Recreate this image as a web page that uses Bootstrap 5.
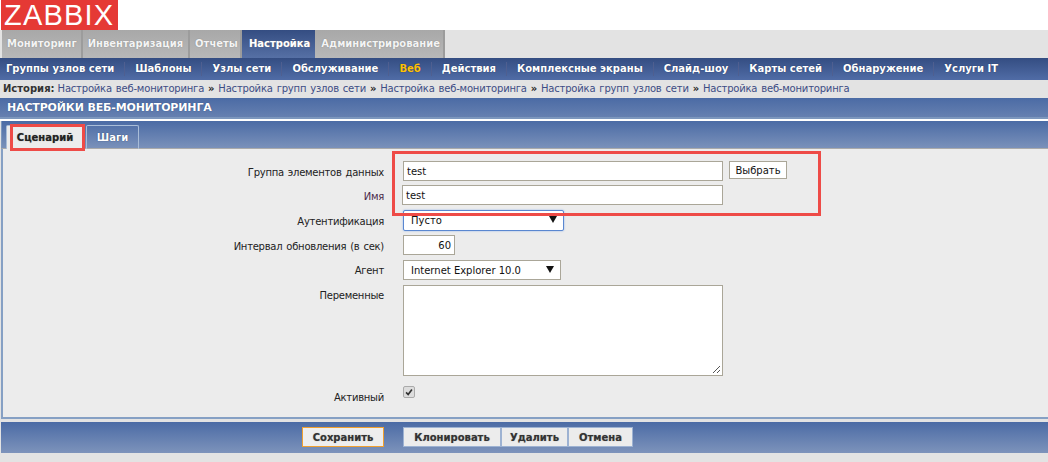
<!DOCTYPE html>
<html lang="ru"><head><meta charset="utf-8"><title>Zabbix</title>
<link rel="stylesheet" href="https://cdn.jsdelivr.net/npm/bootstrap@5.3.0/dist/css/bootstrap.min.css">
<style>
html,body{height:462px;overflow:hidden}
body{background:#e3e3e3;font-family:"DejaVu Sans",sans-serif;font-size:10px;line-height:14px;color:#111;position:relative}
.logo-bar{height:30px;background:#fff}
.logo-box{width:117px;margin-left:1px;height:30px;background:#e53935;color:#fff;font:400 29px/31px "Liberation Sans",sans-serif;letter-spacing:1.2px;padding-left:3px;overflow:hidden}
.main-nav{height:28px;padding-left:2px}
.main-item{height:28px;padding:0 5px;display:flex;align-items:center;font-weight:700;color:#f4f4f4;background:linear-gradient(#a8a8a8,#b8b8b8);border-right:2px solid #9c9c9c;text-shadow:0 0 1px #777;white-space:nowrap}
.main-item.first{padding-right:4px}
.main-item.third{padding-right:2px}
.main-item.on{background:linear-gradient(#344d82,#5670a5);border:0;color:#fff;padding:0 5px 0 7px}
.main-item.last{padding:0 3px 0 6px}
.sub-nav{height:22px;background:linear-gradient(#344d82,#506ca6);padding-left:6px;font-weight:700;color:#fff;align-items:center;white-space:nowrap;text-shadow:0 0 1px #1c2c55}
.sub-nav span{margin-right:10px;padding-right:10px;border-right:1px solid #4f5f90}
.sub-nav span:last-child{border:0}
.sub-nav .cur{color:#ffc107}
.trail{height:18px;padding-left:3px;color:#3d4d85;word-spacing:1px;letter-spacing:-.2px;white-space:nowrap;align-items:center}
.trail b{color:#333;word-spacing:0;letter-spacing:0;margin-right:3px}
.trail i{font-style:normal;font-weight:700;color:#222;margin:0 4px}
.title-bar{height:21px;background:linear-gradient(#4b6ba5,#6680b0);color:#fff;font-size:11px;letter-spacing:-.15px;font-weight:700;line-height:20px;padding-left:7px;border-bottom:2px solid #7d97bd;text-shadow:0 0 1px #274070}
.gap-white{height:2px;background:#fff}
.tab-strip{height:28px;margin-left:1px;background:linear-gradient(#4b6ba5,#7a91ba);padding:4px 0 0 4px;border-bottom:1px solid #aaa;border-left:1px solid #7d97bd}
.tab-one{height:24px;font-weight:700;display:flex;align-items:center;justify-content:center;border:1px solid #a9bdd8;border-bottom:0;border-radius:2px 2px 0 0}
.tab-one.on{background:#ececec;color:#222;width:78px;margin-right:2px;text-shadow:0 0 1px #888}
.tab-one.off{color:#fff;text-shadow:0 0 1px #1c2c55;width:53px}
.form-area{height:270px;margin-left:1px;background:#ececec;border-left:2px solid #86a0c4;border-bottom:2px solid #86a0c4;padding-top:12px}
.f-row{display:flex;margin-bottom:5px}
.f-row.tight{margin-bottom:4px}
.f-label{width:381px;text-align:right;color:#222;flex:none;margin-right:19px;padding-top:5px;word-spacing:1px;letter-spacing:-.25px}
.f-label.name{color:#4a2a4a}
.f-label.top-small{padding-top:4px}
.f-label.low{padding-top:11px}
.f-input{height:20px;background:#fff;border:1px solid #aaa698;padding:0 3px;color:#111;line-height:19px;display:block}
.w-wide{width:320px}
.w-shift{width:321px;margin-left:-1px}
.sel-a{width:161px;height:21px;border:1px solid #5a87d0;border-radius:2px;box-shadow:0 0 2px #8ab0ea;background:#fff;position:relative;padding-left:7px;line-height:19px;overflow:hidden}
.sel-b{width:158px;position:relative;padding-left:7px}
.caret-mark{position:absolute;right:6px;top:5px;width:0;height:0;border-left:4px solid transparent;border-right:4px solid transparent;border-top:7px solid #111}
.num-input{width:52px;text-align:right;padding-right:3px}
.text-box{width:320px;height:91px;background:#fff;border:1px solid #aaa698;position:relative}
.grip{position:absolute;right:1px;bottom:1px}
.pick-btn{height:18px;width:58px;margin-left:6px;background:#fff;border:1px solid #aaa698;font-size:10px;line-height:15px;padding:0;color:#111;text-align:center}
.tick-wrap{padding-top:6px}
.tick{width:12px;height:12px;background:#ddd;border:1px solid #aaa;border-radius:2px;display:block}
.foot-bar{height:31px;margin:3px 0 0 1px;background:linear-gradient(#4b6ba5,#7d93bb);padding:5px 0 0 301px}
.act-btn{height:20px;background:#ececec;border:1px solid #9db2d2;font-size:10px;font-weight:700;line-height:17px;padding:0;color:#333;text-shadow:0 0 1px #999;text-align:center;border-radius:0}
.save{width:82px;border-color:#f0a030;margin-right:19px;background:#eee}
.clone{width:98px}.del{width:67px}.cancel{width:65px}
.mark-red{position:absolute;border:3px solid #ee4b47;pointer-events:none}
.mark-one{left:10px;top:124px;width:75px;height:27px}
.mark-two{left:392px;top:151px;width:429px;height:65px}
</style></head><body>
<div class="logo-bar"><div class="logo-box">ZABBIX</div></div>
<div class="main-nav d-flex">
<div class="main-item first">Мониторинг</div><div class="main-item">Инвентаризация</div><div class="main-item third">Отчеты</div><div class="main-item on">Настройка</div><div class="main-item last">Администрирование</div>
</div>
<div class="sub-nav d-flex"><span>Группы узлов сети</span><span>Шаблоны</span><span>Узлы сети</span><span>Обслуживание</span><span class="cur">Веб</span><span>Действия</span><span>Комплексные экраны</span><span>Слайд-шоу</span><span>Карты сетей</span><span>Обнаружение</span><span>Услуги IT</span></div>
<div class="trail d-flex"><b>История:</b>Настройка веб-мониторинга<i>»</i>Настройка групп узлов сети<i>»</i>Настройка веб-мониторинга<i>»</i>Настройка групп узлов сети<i>»</i>Настройка веб-мониторинга</div>
<div class="title-bar">НАСТРОЙКИ ВЕБ-МОНИТОРИНГА</div>
<div class="gap-white"></div>
<div class="tab-strip d-flex"><div class="tab-one on">Сценарий</div><div class="tab-one off">Шаги</div></div>
<div class="form-area">
<div class="f-row tight"><div class="f-label">Группа элементов данных</div><div class="f-input w-wide">test</div><button class="pick-btn" type="button">Выбрать</button></div>
<div class="f-row"><div class="f-label name">Имя</div><div class="f-input w-shift">test</div></div>
<div class="f-row tight"><div class="f-label">Аутентификация</div><div class="sel-a">Пусто<span class="caret-mark"></span></div></div>
<div class="f-row"><div class="f-label">Интервал обновления (в сек)</div><div class="f-input num-input">60</div></div>
<div class="f-row"><div class="f-label top-small">Агент</div><div class="f-input sel-b">Internet Explorer 10.0<span class="caret-mark"></span></div></div>
<div class="f-row tight"><div class="f-label top-small">Переменные</div><div class="text-box"><svg class="grip" width="9" height="9" viewBox="0 0 9 9"><path d="M8 1 1 8M8 5 5 8" stroke="#555" fill="none"/></svg></div></div>
<div class="f-row"><div class="f-label low">Активный</div><div class="tick-wrap"><svg class="tick" viewBox="0 0 12 12"><path d="M2.5 6.5 5 9l4.5-6" stroke="#333" stroke-width="2" fill="none"/></svg></div></div>
</div>
<div class="foot-bar d-flex"><button class="act-btn save" type="button">Сохранить</button><button class="act-btn clone" type="button">Клонировать</button><button class="act-btn del" type="button">Удалить</button><button class="act-btn cancel" type="button">Отмена</button></div>
<div class="mark-red mark-one"></div><div class="mark-red mark-two"></div>
</body></html>
